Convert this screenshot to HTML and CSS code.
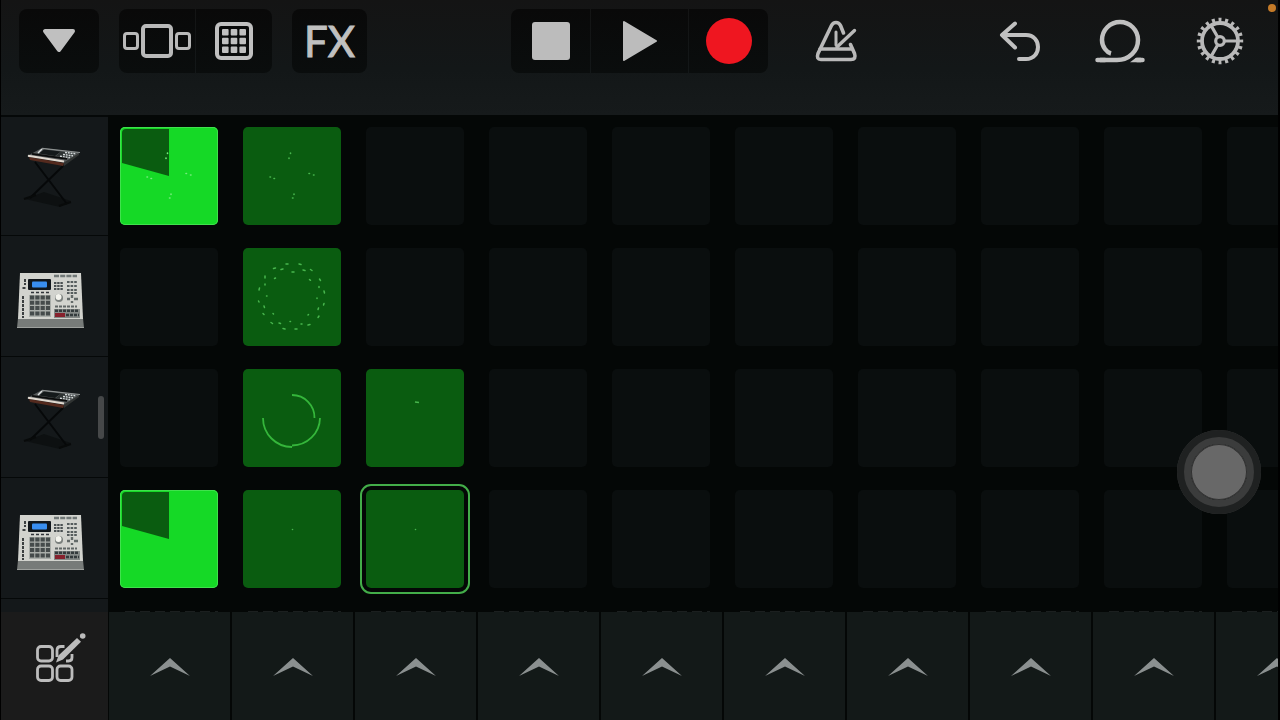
FILE: index.html
```html
<!DOCTYPE html>
<html lang="en">
<head>
<meta charset="utf-8">
<meta name="viewport" content="width=device-width, initial-scale=1">
<title>Live Loops</title>
<link rel="stylesheet" href="styles.css">
</head>
<body>
<svg class="defs" aria-hidden="true">
  <symbol id="chevron" viewBox="0 0 40 18">
    <path d="M20 0 40 18 20 8.500 0 18Z" fill="#8b9090"/>
  </symbol>
  <symbol id="keyboard" viewBox="0 0 81 80">
    <path d="M11 64 30 57 57 66 46 72Z" fill="#0d1011"/>
    <path d="M21 27 53 69M49 31 16 63" stroke="#060809" stroke-width="2" fill="none"/>
    <path d="M10 64 22 60M45 71 57 67" stroke="#080a0a" stroke-width="2"/>
    <path d="M15 22 50 28 49 31 16 25Z" fill="#542a1e"/>
    <path d="M50 27 65 18 65 20 50 31Z" fill="#303332"/>
    <path d="M28 13 66 17.500 50 27.500 13 21Z" fill="#55595a"/>
    <path d="M28 13.300 66 17.500" stroke="#8d9191" stroke-width="1.200"/>
    <path d="M30 14.500 47 16.500 41 21 25 18.500Z" fill="#14191a"/>
    <path d="M28 14 24 18" stroke="#dcdfdf" stroke-width="1.400"/>
    <path d="M47 16.500 63 18.500 54 23 42 21Z" fill="#2c3131"/>
    <path d="M51 17.500 62 18.800M49 19.500 59 20.800M46 21.300 56 22.600" stroke="#d2d7d8" stroke-width="1.500" stroke-dasharray="2 .8"/>
    <path d="M18 18.800 53 23.800" stroke="#0a0b0b" stroke-width="1.800"/>
    <path d="M14 20.800 50 26.500" stroke="#e0d9d0" stroke-width="2"/>
  </symbol>
  <symbol id="drums" viewBox="0 0 81 80">
    <path d="M4 62H69L70 72H3Z" fill="#777b79"/>
    <path d="M3 71.500H70" stroke="#9da09d" stroke-width="1"/>
    <path d="M6 17H67L69 63H4Z" fill="#d2d3ce"/>
    <rect x="14" y="23" width="23" height="11" rx="1" fill="#11161b"/>
    <rect x="18" y="25.500" width="15" height="6" rx="1" fill="#398ef0"/>
    <path d="M17 36.500H35" stroke="#30343a" stroke-width="1.500" stroke-dasharray="3 2"/>
    <rect x="15" y="39" width="22" height="22" fill="#a9ada9"/>
    <path d="M16 41.500H36M16 46.800H36M16 52.100H36M16 57.400H36" stroke="#454b4b" stroke-width="4" stroke-dasharray="4.200 1.100"/>
    <path d="M11 23V29M8.500 32H12M9 40V62" stroke="#3b3f40" stroke-width="2" stroke-dasharray="3 1"/>
    <path d="M40 20H63" stroke="#717877" stroke-width="2.500" stroke-dasharray="5 1.200"/>
    <path d="M40 27H49M40 30H49M40 33H49" stroke="#494f51" stroke-width="2" stroke-dasharray="2.400 .8"/>
    <path d="M53 26H63M53 30H63M53 34H63M53 37H63" stroke="#555c5d" stroke-width="2" stroke-dasharray="2.600 1"/>
    <circle cx="45" cy="42" r="4" fill="#7b807e"/><circle cx="44.500" cy="41" r="3" fill="#f4f4ee"/>
    <path d="M58 39V42M58 45V47M53 43H56M60 43H64" stroke="#626968" stroke-width="2.400"/>
    <path d="M41 50.500H63" stroke="#606766" stroke-width="2" stroke-dasharray="3 1"/>
    <rect x="40" y="53" width="26" height="9" fill="#858a88"/>
    <rect x="41" y="57" width="10" height="4" fill="#86212d"/>
    <path d="M41 54.800H65M52 59H65" stroke="#343b3d" stroke-width="2.600" stroke-dasharray="3 1"/>
  </symbol>
  <symbol id="scatter" viewBox="0 0 98 98">
    <path d="M47.500 26v.5M46 31v.5M27 50h.5M31 51.500h.5M66 46.500h.5M70.500 48h.5M51 67v.5M49.500 71h.5" fill="none" stroke="currentColor" stroke-width="1.600" stroke-linecap="round"/>
  </symbol>
  <symbol id="pie" viewBox="0 0 98 98">
    <path d="M2 6Q2 2 6 2H49V49L2 36Z" fill="#0a5c10"/>
  </symbol>
  <symbol id="dot" viewBox="0 0 98 98">
    <circle cx="49.500" cy="39.500" r=".8" fill="currentColor"/>
  </symbol>
</svg>

<div class="app">
  <header class="toolbar">
    <div class="tools-left">
      <button class="tile menu" aria-label="Menu">
        <svg width="34" height="24" viewBox="0 0 34 24"><path d="M3 2H31L17 21Z" fill="#c0c0c0" stroke="#c0c0c0" stroke-width="4" stroke-linejoin="round"/></svg>
      </button>
      <div class="segment">
        <button class="tile view" aria-label="Tracks view">
          <svg width="68" height="34" viewBox="0 0 68 34" fill="none" stroke="#b9b9b9"><rect x="1.500" y="9.500" width="13" height="15" rx="2.500" stroke-width="3"/><rect x="20" y="2" width="28" height="30" rx="3" stroke-width="4"/><rect x="53.500" y="9.500" width="13" height="15" rx="2.500" stroke-width="3"/></svg>
        </button>
        <button class="tile view" aria-label="Live loops grid" aria-pressed="true">
          <svg width="38" height="40" viewBox="1 0 38 40" fill="#c0c0c0"><rect x="3" y="3" width="34" height="34" rx="4" fill="none" stroke="#c0c0c0" stroke-width="4"/><g id="cells"><rect x="8" y="8" width="6.600" height="6.600" rx="1"/><rect x="16.700" y="8" width="6.600" height="6.600" rx="1"/><rect x="25.400" y="8" width="6.600" height="6.600" rx="1"/></g><use href="#cells" y="8.700"/><use href="#cells" y="17.400"/></svg>
        </button>
      </div>
      <button class="tile fx">FX</button>
    </div>

    <div class="segment">
      <button class="tile transport" aria-label="Stop">
        <svg width="38" height="38" viewBox="0 0 38 38"><rect width="38" height="38" rx="3" fill="#bcbcbc"/></svg>
      </button>
      <button class="tile play" aria-label="Play">
        <svg width="36" height="42" viewBox="0 0 36 42"><path d="M2 2 34 21 2 40Z" fill="#bcbcbc" stroke="#bcbcbc" stroke-width="2" stroke-linejoin="round"/></svg>
      </button>
      <button class="tile transport" aria-label="Record">
        <svg width="46" height="46" viewBox="0 0 46 46"><circle cx="23" cy="23" r="23" fill="#ef1620"/></svg>
      </button>
    </div>

    <div class="tools-right">
      <button class="plain" aria-label="Metronome">
        <svg width="42" height="42" viewBox="0 0 42 42" fill="none" stroke="#b9b9b9" stroke-width="3.600" stroke-linecap="round" stroke-linejoin="round"><path d="M28.500 13 25.500 5.500Q24 2.500 21 2.500T16.500 5.500L3 33.500Q1 39.500 6 39.500H36Q41.500 39.500 39.500 33.500L35.500 24.500"/><path d="M5 29H37" stroke-width="3.600"/><path d="M21 12V25" stroke-width="3"/><path d="M22 27 39.500 10.500" stroke-width="3.400"/></svg>
      </button>
      <div class="actions">
        <button class="plain" aria-label="Undo">
          <svg width="42" height="42" viewBox="0 0 42 42" fill="none" stroke="#c0c0c0" stroke-width="4" stroke-linecap="round" stroke-linejoin="round"><path d="M16 3.500 3 15 16 27.500M4 15H27C43 15 43 39 27 39H20"/></svg>
        </button>
        <button class="plain" aria-label="Loop browser">
          <svg width="50" height="44" viewBox="0 0 50 44" fill="none" stroke="#c0c0c0" stroke-width="4.500"><path d="M16 34.500C12 33.500 7 28 7 21A18 18 0 0 1 43 21C43 32 34 41 22 41H5" stroke-linecap="butt"/><path d="M2.500 41H10M42 41H47.500" stroke-linecap="round"/><path d="M35 43.200 41 38.800H46V43.200Z" fill="#c0c0c0" stroke="none"/></svg>
        </button>
        <button class="plain" aria-label="Settings">
          <svg width="48" height="48" viewBox="-24 -24 48 48" fill="none" stroke="#b9b9b9"><circle r="18" stroke-width="3.800"/><circle r="21" stroke-width="4.400" pathLength="80" stroke-dasharray="1.800 2.200" stroke-dashoffset=".9"/><circle r="4.300" stroke-width="3.200"/><path d="M5 0H18M-2.500 4.300-9 15.600M-2.500-4.300-9-15.600" stroke-width="3.200"/></svg>
        </button>
      </div>
    </div>
  </header>

  <main class="tracks">
    <section class="track">
      <button class="instrument" aria-label="Keyboard 1"><svg width="81" height="80"><use href="#keyboard"/></svg></button>
      <div class="clips">
        <button class="clip playing" aria-label="Clip 1"><svg><use href="#pie"/><use href="#scatter"/></svg></button>
        <button class="clip filled" aria-label="Clip 2"><svg><use href="#scatter"/></svg></button>
        <button class="clip"></button><button class="clip"></button><button class="clip"></button><button class="clip"></button><button class="clip"></button><button class="clip"></button><button class="clip"></button><button class="clip"></button>
      </div>
    </section>
    <section class="track">
      <button class="instrument" aria-label="Drums 1"><svg width="81" height="80"><use href="#drums"/></svg></button>
      <div class="clips">
        <button class="clip"></button>
        <button class="clip filled" aria-label="Clip 2">
          <svg viewBox="0 0 98 98" fill="none" stroke="currentColor" stroke-width="1.500" stroke-linecap="round"><path d="M43 16h2M56 16l2 .5M30.500 20.500l2-.5M38 21.500l2-.5M49 24h2M60 22l2 .5M67.500 21.500l1.500 1M22 28v2M31.500 30.500l1-.5M66.500 31.500l1 .8M76.500 31l1 1.500M22 36v1M16.500 40l-.5 2M76 38.500v1M81 43l.5 2M23.500 48h.5M74 50v.5M15.500 53l.5 1M81 55.500l-.5 1.500M21 58l.5 1.500M75.500 60l-.5 1.500M20 65.500l1 1M30 65.500l.5.5M65.500 66.500l-.5.5M76 68l-1 1.500M28 74.500l1.500 1M36 75l1.500.5M47 73.500h.5M59 76h-1M67 76.500l-2 .5M40 80.500l2 .5M54 81h-2"/></svg>
        </button>
        <button class="clip"></button><button class="clip"></button><button class="clip"></button><button class="clip"></button><button class="clip"></button><button class="clip"></button><button class="clip"></button><button class="clip"></button>
      </div>
    </section>
    <section class="track">
      <button class="instrument" aria-label="Keyboard 2"><svg width="81" height="80"><use href="#keyboard"/></svg></button>
      <div class="clips">
        <button class="clip"></button>
        <button class="clip filled" aria-label="Clip 2">
          <svg viewBox="0 0 98 98" fill="none" stroke="#35b63b" stroke-width="1.800"><path d="M49 26A22.500 22.500 0 0 1 71.500 49M77 49A28 28 0 0 1 49 76.500M49 78A29 29 0 0 1 20 49"/></svg>
        </button>
        <button class="clip filled" aria-label="Clip 3">
          <svg viewBox="0 0 98 98" fill="none" stroke="currentColor" stroke-width="1.500"><path d="M49 33 53 33.500"/></svg>
        </button>
        <button class="clip"></button><button class="clip"></button><button class="clip"></button><button class="clip"></button><button class="clip"></button><button class="clip"></button><button class="clip"></button>
      </div>
    </section>
    <section class="track">
      <button class="instrument" aria-label="Drums 2"><svg width="81" height="80"><use href="#drums"/></svg></button>
      <div class="clips">
        <button class="clip playing" aria-label="Clip 1"><svg><use href="#pie"/></svg></button>
        <button class="clip filled" aria-label="Clip 2"><svg><use href="#dot"/></svg></button>
        <button class="clip filled selected" aria-label="Clip 3"><svg><use href="#dot"/></svg></button>
        <button class="clip"></button><button class="clip"></button><button class="clip"></button><button class="clip"></button><button class="clip"></button><button class="clip"></button><button class="clip"></button>
      </div>
    </section>
    <section class="track">
      <div class="instrument"></div>
      <div class="clips">
        <span class="clip add"></span><span class="clip add"></span><span class="clip add"></span><span class="clip add"></span><span class="clip add"></span><span class="clip add"></span><span class="clip add"></span><span class="clip add"></span><span class="clip add"></span><span class="clip add"></span>
      </div>
    </section>
    <div class="scroll-thumb"></div>
  </main>

  <footer class="triggers">
    <button class="edit" aria-label="Edit cells">
      <svg width="64" height="64" viewBox="1 0 64 64" fill="none" stroke="#bcbcbc" stroke-width="2.800"><rect x="15.500" y="12.500" width="15" height="14.500" rx="3.500"/><rect x="15.500" y="32" width="15" height="14.500" rx="3.500"/><rect x="35" y="32" width="15" height="14.500" rx="3.500"/><path d="M35 23V16.500Q35 12.500 39 12.500H42.500M44 27H46.500Q50 27 50 23.500V20"/><path d="M34 28.500 36.500 21.500 55 4 59 7.800 41 25.500Z" fill="#bcbcbc" stroke="none"/><circle cx="60.700" cy="2" r="2.800" fill="#bcbcbc" stroke="none"/></svg>
    </button>
    <div class="columns">
      <button class="trigger" aria-label="Play column 1"><svg width="40" height="18"><use href="#chevron"/></svg></button>
      <button class="trigger" aria-label="Play column 2"><svg width="40" height="18"><use href="#chevron"/></svg></button>
      <button class="trigger" aria-label="Play column 3"><svg width="40" height="18"><use href="#chevron"/></svg></button>
      <button class="trigger" aria-label="Play column 4"><svg width="40" height="18"><use href="#chevron"/></svg></button>
      <button class="trigger" aria-label="Play column 5"><svg width="40" height="18"><use href="#chevron"/></svg></button>
      <button class="trigger" aria-label="Play column 6"><svg width="40" height="18"><use href="#chevron"/></svg></button>
      <button class="trigger" aria-label="Play column 7"><svg width="40" height="18"><use href="#chevron"/></svg></button>
      <button class="trigger" aria-label="Play column 8"><svg width="40" height="18"><use href="#chevron"/></svg></button>
      <button class="trigger" aria-label="Play column 9"><svg width="40" height="18"><use href="#chevron"/></svg></button>
      <button class="trigger" aria-label="Play column 10"><svg width="40" height="18"><use href="#chevron"/></svg></button>
    </div>
  </footer>

  <button class="assistive" aria-label="Assistive touch"></button>
  <div class="mic-dot"></div>
</div>
</body>
</html>
```

FILE: styles.css
```css
* { box-sizing: border-box; }

body {
  margin: 0;
  background: #000;
  font-family: Lato, "Liberation Sans", sans-serif;
  color: #c0c0c0;
}

button {
  border: 0;
  padding: 0;
  margin: 0;
  background: none;
  color: inherit;
  font: inherit;
}

svg { display: block; flex: none; overflow: visible; }

.defs { position: absolute; width: 0; height: 0; }

.app {
  position: relative;
  display: flex;
  flex-direction: column;
  height: 100vh;
  padding: 0 2px 0 1px;
  overflow: hidden;
}

/* Toolbar */
.toolbar {
  display: grid;
  grid-template-columns: 1fr auto 1fr;
  align-items: start;
  flex: none;
  height: 115px;
  padding: 9px 18px 0;
  background: linear-gradient(#141414, #131718 60%, #161a1b);
}

.tools-left { display: flex; gap: 20px; }

.segment {
  display: flex;
  gap: 1px;
  border-radius: 8px;
  overflow: hidden;
}

.tile,
.plain {
  display: flex;
  align-items: center;
  justify-content: center;
  height: 64px;
}

.tile { background: linear-gradient(#090909, #0a0d0d); border-radius: 8px; }
.segment .tile { border-radius: 0; }
.menu { width: 80px; }
.transport { width: 79px; }
.view { width: 76px; }
.play { width: 97px; }

.fx {
  width: 75px;
  font-size: 42px;
  line-height: 64px;
  -webkit-text-stroke: 1px #c0c0c0;
}

.tools-right {
  display: flex;
  justify-content: space-between;
  padding-left: 28px;
}

.plain { width: 80px; }
.actions { display: flex; gap: 20px; }

/* Tracks */
.tracks {
  position: relative;
  flex: 1;
  min-height: 0;
  overflow: hidden;
  background: #040706;
}

.track,
.triggers {
  display: grid;
  grid-template-columns: 107px minmax(0, 1fr);
}

.track { height: 121px; }

.instrument {
  display: flex;
  align-items: center;
  justify-content: center;
  background: #14181a;
  border-bottom: 1px solid #050808;
}

.track:first-child .instrument { box-shadow: inset 0 2px #050808; }

.clips {
  display: flex;
  gap: 25px;
  padding: 12px 0 0 12px;
}

.clip {
  flex: none;
  width: 98px;
  height: 98px;
  border-radius: 5px;
  background: #0a0e0e;
}

.clip svg { width: 98px; height: 98px; }
.filled { background: #0a5c10; color: #48b64e; }
.playing { background: #15d926; box-shadow: inset 0 0 0 1px #40e14d; color: #76ec7c; }
.selected { outline: 2px solid #43ad49; outline-offset: 4px; }

.add {
  border-radius: 0;
  background: repeating-linear-gradient(90deg, #040706 0 5px, #1b1f1f 5px 15px);
}

.scroll-thumb {
  position: absolute;
  left: 97px;
  top: 281px;
  width: 6px;
  height: 43px;
  border-radius: 3px;
  background: #464849;
}

/* Column triggers */
.triggers { flex: none; height: 108px; }

.edit {
  display: flex;
  align-items: center;
  justify-content: center;
  background: #1b1b1b;
}

.columns { display: flex; overflow: hidden; border-left: 1px solid #040706; }

.trigger {
  display: flex;
  flex: none;
  align-items: center;
  justify-content: center;
  width: 123px;
  padding-top: 2px;
  border-right: 2px solid #040706;
  background: #131918;
}

/* Overlays */
.assistive {
  position: absolute;
  right: 19px;
  bottom: 206px;
  width: 84px;
  height: 84px;
  border: 14px solid #3b3c3c;
  border-radius: 50%;
  background: #686868;
  background-clip: padding-box;
  box-shadow: inset 0 0 0 1px #303030;
}

.assistive::before {
  content: "";
  position: absolute;
  inset: -14px;
  border: 7px solid #1f2121;
  border-radius: 50%;
}

.mic-dot {
  position: absolute;
  top: 4px;
  right: 4px;
  width: 8px;
  height: 8px;
  border-radius: 50%;
  background: #c47a28;
}
```
